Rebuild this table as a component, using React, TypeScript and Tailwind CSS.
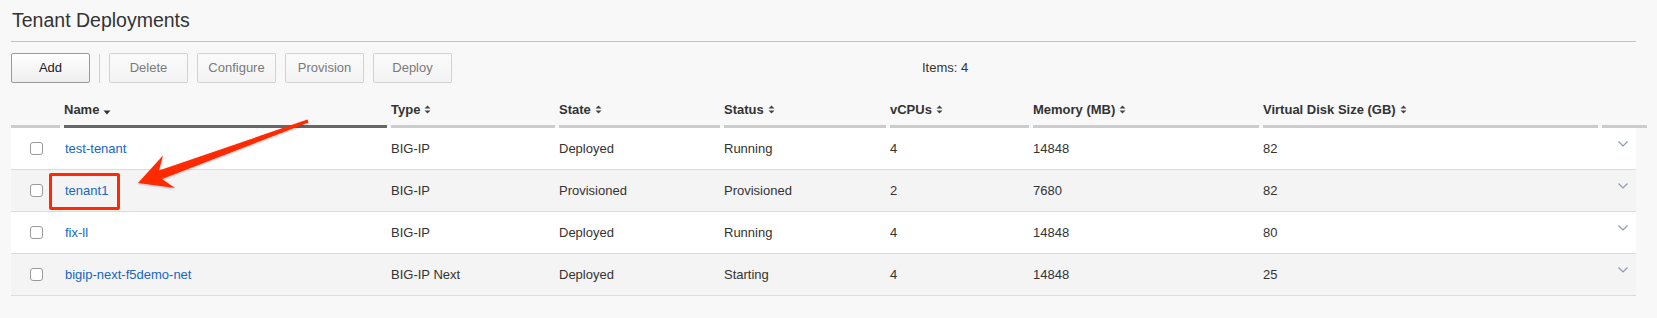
import React from "react";

const cols =
  "grid grid-cols-[49px_323px_164px_161px_162px_139px_226px_335px_45px] gap-x-[4px]";

const tenants = [
  { name: "test-tenant", type: "BIG-IP", state: "Deployed", status: "Running", vcpus: "4", memory: "14848", disk: "82" },
  { name: "tenant1", type: "BIG-IP", state: "Provisioned", status: "Provisioned", vcpus: "2", memory: "7680", disk: "82" },
  { name: "fix-ll", type: "BIG-IP", state: "Deployed", status: "Running", vcpus: "4", memory: "14848", disk: "80" },
  { name: "bigip-next-f5demo-net", type: "BIG-IP Next", state: "Deployed", status: "Starting", vcpus: "4", memory: "14848", disk: "25" },
];

function SortBoth() {
  return (
    <svg width="7" height="9" viewBox="0 0 7 9" className="ml-[4px] mb-[3px]">
      <path d="M0.5 3.5 L3.5 0.5 L6.5 3.5 Z" fill="#444" />
      <path d="M0.5 5.5 L3.5 8.5 L6.5 5.5 Z" fill="#444" />
    </svg>
  );
}

function SortDown() {
  return (
    <svg width="8" height="5" viewBox="0 0 8 5" className="ml-[4px] mb-[2px]">
      <path d="M0.5 0.5 L7.5 0.5 L4 4.5 Z" fill="#333" />
    </svg>
  );
}

function HeaderCell({ label, active, sortable = true }: { label?: string; active?: boolean; sortable?: boolean }) {
  return (
    <div
      className={`h-[45px] flex items-end pb-[8px] border-b-[3px] text-[13px] leading-[15px] font-bold text-[#333] ${
        active ? "border-[#666]" : "border-[#cccccc]"
      }`}
    >
      {label}
      {label && sortable && (active ? <SortDown /> : <SortBoth />)}
    </div>
  );
}

function Button({ label, disabled }: { label: string; disabled?: boolean }) {
  return (
    <button
      className={`w-[79px] h-[30px] rounded-[2px] border text-[13px] bg-gradient-to-b ${
        disabled
          ? "border-[#d2d2d2] text-[#7a7a7a] from-[#fbfbfb] to-[#f3f3f3]"
          : "border-[#9a9a9a] text-[#222] from-[#ffffff] to-[#eeeeee]"
      }`}
    >
      {label}
    </button>
  );
}

export default function App() {
  return (
    <div className="relative w-[1657px] h-[318px] bg-[#f8f8f8] font-['Liberation_Sans',Arial,sans-serif] text-[#333] overflow-hidden">
      <div className="px-[11px] w-[1647px]">
        {/* title */}
        <div className="h-[42px] border-b border-[#c4c4c4] text-[19.5px] leading-[41px] text-[#333] pl-px">
          Tenant Deployments
        </div>

        {/* toolbar */}
        <div className="mt-[11px] flex items-center h-[30px]">
          <Button label="Add" />
          <div className="w-px h-[29px] bg-[#cfcfcf] mx-[9px]" />
          <div className="flex gap-[9px]">
            <Button label="Delete" disabled />
            <Button label="Configure" disabled />
            <Button label="Provision" disabled />
            <Button label="Deploy" disabled />
          </div>
          <span className="ml-[470px] text-[13px] text-[#333]">Items: 4</span>
        </div>

        {/* table header */}
        <div className={cols}>
          <HeaderCell />
          <HeaderCell label="Name" active />
          <HeaderCell label="Type" />
          <HeaderCell label="State" />
          <HeaderCell label="Status" />
          <HeaderCell label="vCPUs" />
          <HeaderCell label="Memory (MB)" />
          <HeaderCell label="Virtual Disk Size (GB)" />
          <HeaderCell />
        </div>

        {/* rows */}
        {tenants.map((t, i) => (
          <div
            key={t.name}
            className={`${cols} h-[42px] items-center border-b border-[#dcdcdc] text-[13px] ${
              i % 2 === 0 ? "bg-white" : "bg-[#f4f4f4]"
            }`}
          >
            <div className="pl-[19px] flex items-center">
              <div className="w-[13px] h-[13px] rounded-[3px] border border-[#9a9a9a] bg-white" />
            </div>
            <div className="pl-px text-[#1467c4]">{t.name}</div>
            <div>{t.type}</div>
            <div>{t.state}</div>
            <div>{t.status}</div>
            <div>{t.vcpus}</div>
            <div>{t.memory}</div>
            <div>{t.disk}</div>
            <div className="flex justify-center pb-[10px] pr-[4px]">
              <svg width="10" height="6" viewBox="0 0 10 6">
                <path d="M0.5 0.5 L5 5 L9.5 0.5" fill="none" stroke="#8c9bb0" strokeWidth="1.2" />
              </svg>
            </div>
          </div>
        ))}
      </div>

      {/* annotation overlay */}
      <div className="absolute left-[49px] top-[173px] w-[71px] h-[37px] border-[3px] border-[#ff2a00] rounded-[2px] pointer-events-none" />
      <svg className="absolute left-0 top-0 pointer-events-none" width="1657" height="318">
        <defs>
          <filter id="sh" x="-10%" y="-10%" width="120%" height="130%">
            <feDropShadow dx="0" dy="1" stdDeviation="1" floodColor="#000" floodOpacity="0.25" />
          </filter>
        </defs>
        <polygon
          points="138,183 175,188 162,179 308.5,122.4 307.5,119.6 159,170.6 163,155.5"
          fill="#ff2a00"
          filter="url(#sh)"
        />
      </svg>
    </div>
  );
}
